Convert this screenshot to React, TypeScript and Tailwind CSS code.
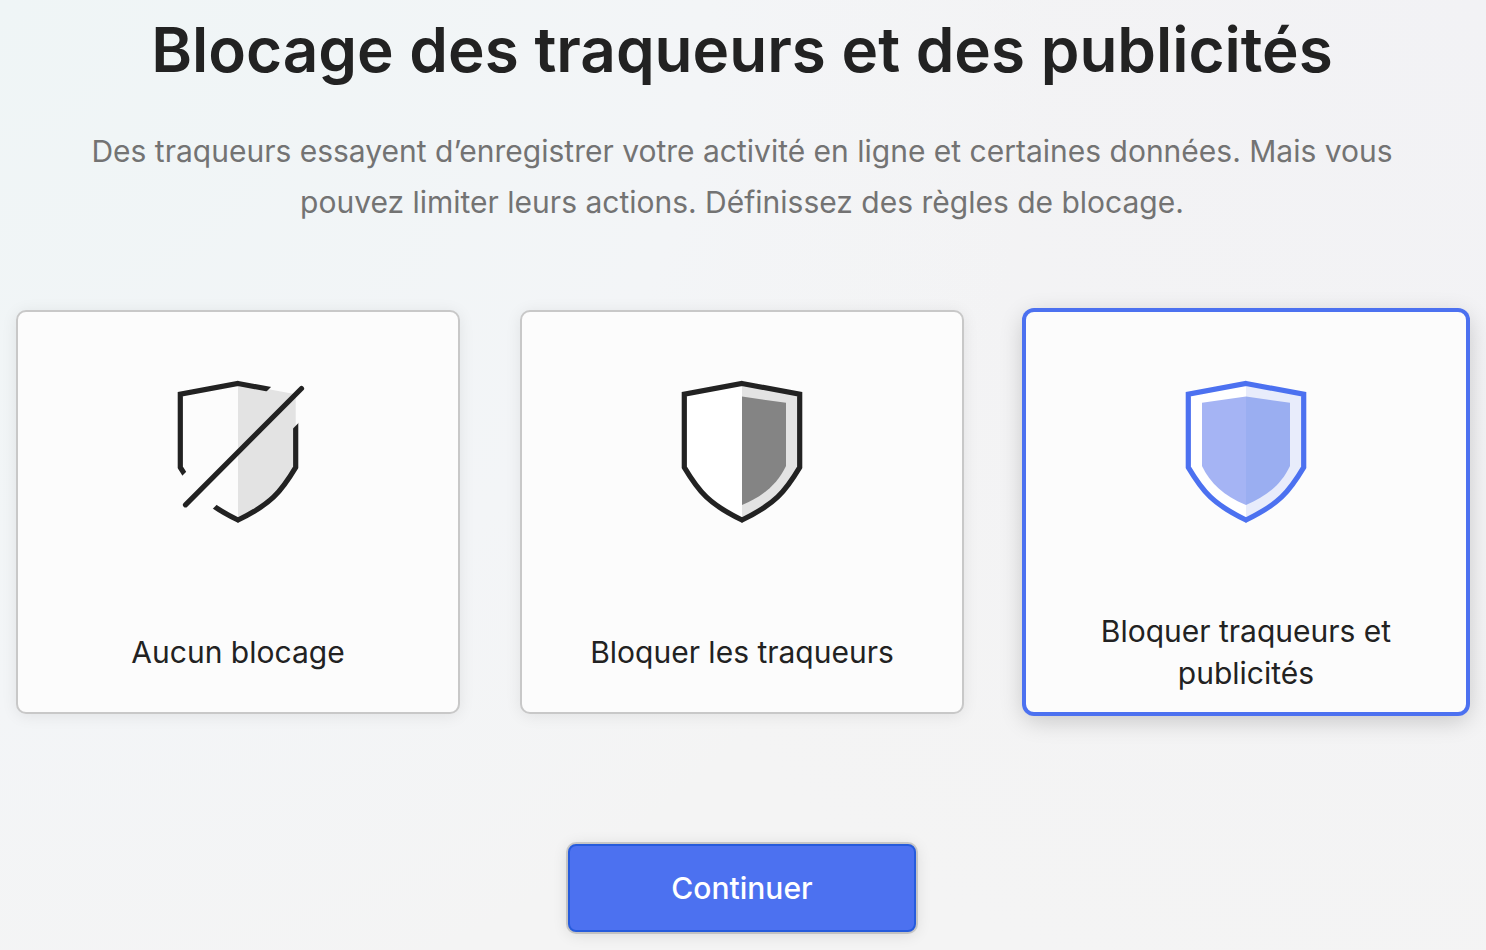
import React, { useState } from 'react';

type Level = 'none' | 'trackers' | 'all';

const SHIELD = 'M0 18.5 L57.7 29.2 V102.4 C43 127 33 139 0 155 C-33 139 -43 127 -57.7 102.4 V29.2 Z';
const SHIELD_RIGHT = 'M0 18.5 L57.7 29.2 V102.4 C43 127 33 139 0 155 Z';
const CORE_RIGHT = 'M0 31.6 L44 37.8 V101 C36 118 22 131 0 140 Z';
const CORE_LEFT = 'M0 31.6 L-44 37.8 V101 C-36 118 -22 131 0 140 Z';

const ShieldOff: React.FC = () => (
  <svg viewBox="-72 11 144 160" className="w-36 h-40 shrink-0" aria-hidden="true">
    <clipPath id="outside-slash">
      <path d="M-72 127 V0 H55 Z" />
      <path d="M72 46.5 V171 H-52.5 Z" />
    </clipPath>
    <path d={SHIELD_RIGHT} fill="#e3e3e3" />
    <path d={SHIELD} fill="none" stroke="#222222" strokeWidth="5.2" clipPath="url(#outside-slash)" />
    <path d="M-52.5 139.8 L63.5 23.5" stroke="#222222" strokeWidth="5.2" strokeLinecap="round" />
  </svg>
);

const ShieldHalf: React.FC = () => (
  <svg viewBox="-72 11 144 160" className="w-36 h-40 shrink-0" aria-hidden="true">
    <path d={SHIELD} fill="#ffffff" />
    <path d={SHIELD_RIGHT} fill="#e3e3e3" />
    <path d={CORE_RIGHT} fill="#848484" />
    <path d={SHIELD} fill="none" stroke="#222222" strokeWidth="5.2" />
  </svg>
);

const ShieldFull: React.FC = () => (
  <svg viewBox="-72 11 144 160" className="w-36 h-40 shrink-0" aria-hidden="true">
    <path d={SHIELD} fill="#ffffff" />
    <path d={SHIELD_RIGHT} fill="#e8ecfb" />
    <path d={CORE_LEFT} fill="#a5b4f4" />
    <path d={CORE_RIGHT} fill="#9aaef1" />
    <path d={SHIELD} fill="none" stroke="#4c71f0" strokeWidth="5.2" />
  </svg>
);

const OPTIONS: { id: Level; label: string; icon: React.ReactNode }[] = [
  { id: 'none', label: 'Aucun blocage', icon: <ShieldOff /> },
  { id: 'trackers', label: 'Bloquer les traqueurs', icon: <ShieldHalf /> },
  { id: 'all', label: 'Bloquer traqueurs et publicités', icon: <ShieldFull /> },
];

const App: React.FC = () => {
  const [level, setLevel] = useState<Level>('all');

  return (
    <main className="min-h-screen bg-[#f4f4f4] bg-[radial-gradient(circle_at_top_left,#eff5f6,#f3f5f7_40%,transparent_60%),radial-gradient(circle_at_top_right,#f2f2f5,transparent_60%)] font-['Inter','Liberation_Sans',sans-serif] text-[#222222] pl-4 pr-[18px] pt-[10px] pb-4 flex flex-col items-center">
      <h1 id="blocking-title" className="text-[62px] leading-[80px] font-semibold text-center">
        Blocage des traqueurs et des publicités
      </h1>
      <p className="mt-9 max-w-[1320px] text-[30px] leading-[51px] text-center text-[#737373]">
        Des traqueurs essayent d’enregistrer votre activité en ligne et certaines données. Mais vous pouvez limiter leurs actions. Définissez des règles de blocage.
      </p>

      {/* Blocking level */}
      <div role="radiogroup" aria-labelledby="blocking-title" className="mt-[82px] w-full grid grid-cols-3 gap-[60px]">
        {OPTIONS.map((option) => (
          <label
            key={option.id}
            className="relative flex flex-col items-center justify-between min-h-[404px] pt-16 pb-[18px] px-10 rounded-[10px] border-2 border-[#c8c8c8] bg-[#fcfcfc] shadow-[0_2px_16px_rgba(0,0,0,0.08)] cursor-pointer has-checked:border-[#4c71f0] has-checked:shadow-[0_0_0_2px_#4c71f0,0_6px_24px_rgba(0,0,0,0.2)]"
          >
            <input
              type="radio"
              name="level"
              value={option.id}
              checked={level === option.id}
              onChange={() => setLevel(option.id)}
              className="absolute inset-0 appearance-none cursor-pointer"
            />
            {option.icon}
            <span className="min-h-[84px] flex items-center text-center text-[30px] leading-[42px]">
              {option.label}
            </span>
          </label>
        ))}
      </div>

      <button
        type="button"
        className="mt-[130px] w-[348px] h-[88px] rounded-lg border-2 border-[#265bdc] bg-[#4c71f0] text-white text-[30px] leading-[42px] font-medium shadow-[0_0_0_2px_rgba(0,0,0,0.15),0_2px_16px_rgba(0,0,0,0.12)] cursor-pointer"
      >
        Continuer
      </button>
    </main>
  );
};

export default App;
